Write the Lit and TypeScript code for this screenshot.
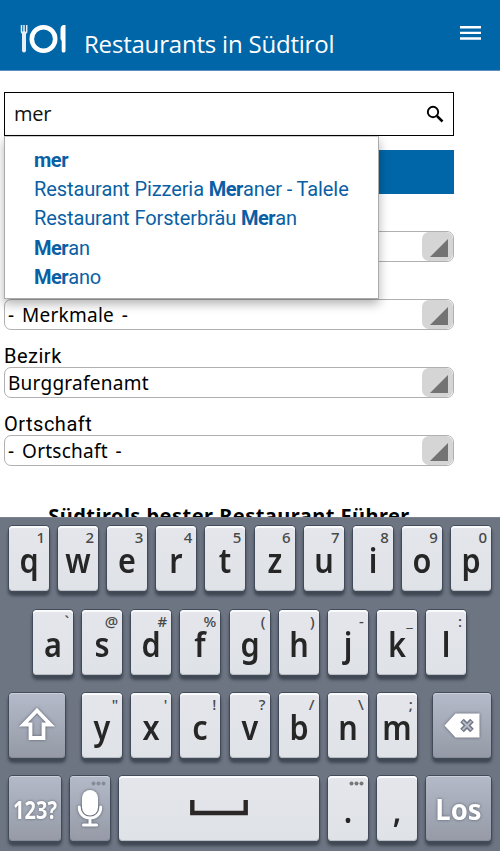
import { html, css, svg, LitElement } from 'lit';
import { customElement, property } from 'lit/decorators.js';

const icons: Record<string, any> = {
  shift: svg`<svg class="icon" width="36" height="36" viewBox="0 0 36 36">
    <path d="M18 3.500L31.500 17.500H24.500V31H11.500V17.500H4.500Z" fill="none" stroke="#fff" stroke-width="3.800"/>
  </svg>`,
  back: svg`<svg class="icon" width="36" height="25" viewBox="0 0 36 25">
    <path d="M.5 12.500L11.500 .5H35.500V24.500H11.500Z" fill="#fff"/>
    <path d="M18 7.500l10 10M28 7.500l-10 10" stroke="#6f7584" stroke-width="5"/>
    <path d="M18.700 8.200l8.600 8.600M27.300 8.200l-8.600 8.600" stroke="#b4b9c6" stroke-width="2"/>
  </svg>`,
  mic: svg`<svg class="icon" width="26" height="37" viewBox="0 0 26 37">
    <rect x="5" y="0" width="16" height="25.500" rx="8" fill="#fff"/>
    <path d="M2.300 17V18a10.700 10 0 0 0 21.400 0V17M13 28V34M6.500 35H19.500" fill="none" stroke="#fff" stroke-width="3" stroke-linecap="round"/>
  </svg>`,
  space: svg`<svg class="icon" width="58" height="16" viewBox="0 0 58 16">
    <path d="M2.300 0V13H55.700V0" fill="none" stroke="#2b2727" stroke-width="4.400"/>
  </svg>`,
};

@customElement('select-box')
export class SelectBox extends LitElement {
  static styles = css`
    :host {
      display: block;
      height: 68px;
      color: #000;
    }
    .label {
      box-sizing: border-box;
      height: 23px;
      padding-top: 1px;
      font: 20px/23px Roboto, sans-serif;
      letter-spacing: 0.5px;
    }
    .box {
      box-sizing: border-box;
      display: flex;
      justify-content: space-between;
      height: 31px;
      border: 1px solid #b0b0b0;
      border-radius: 7px;
      background: #fff;
      overflow: hidden;
    }
    .value {
      padding-left: 3px;
      font: 19px/31px "Noto Sans", sans-serif;
      letter-spacing: 0.25px;
      word-spacing: 2.500px;
    }
    .arrow {
      box-sizing: border-box;
      width: 31px;
      height: 29px;
      padding: 7px 0 0 8px;
      border-radius: 7px;
      background: #d5d5d5;
    }
    .arrow svg {
      display: block;
    }
  `;

  @property() label = '';
  @property() value = '';

  render() {
    return html`
      <div class="label">${this.label}</div>
      <div class="box">
        <span class="value">${this.value}</span>
        <span class="arrow">
          <svg width="18" height="18" viewBox="0 0 18 18"><path d="M18 0V18H0Z" fill="#737373"/></svg>
        </span>
      </div>
    `;
  }
}

@customElement('soft-key')
export class SoftKey extends LitElement {
  static styles = css`
    :host {
      display: block;
      flex: none;
    }
    .key {
      box-sizing: border-box;
      position: relative;
      height: 65px;
      border-radius: 4px;
      background: linear-gradient(#e4e6ec, #dfe2e6);
      box-shadow: inset 0 2px 0 #fafbfc, inset 0 -1px 0 #b9bcc0, 0 0 0 1px #414b59, 0 4px 3px 1px #3f4853;
      color: #262626;
      text-align: center;
    }
    .dark {
      background: linear-gradient(#b4bac9, #959aa6);
      box-shadow: inset 0 1px 0 #ccd0da, inset 0 -1px 0 #858a95, 0 0 0 1px #414b59, 0 4px 3px 1px #3f4853;
      color: #fff;
      text-shadow: 0 0 3px #555b68;
    }
    .main {
      padding-top: 17px;
      font: 600 34px/34px "Noto Sans", sans-serif;
      transform: scaleX(0.9);
    }
    .num {
      font: bold 25px/66px "Noto Sans", sans-serif;
      transform: scaleX(0.8);
      margin: 0 -10px;
    }
    .go {
      font: bold 28px/66px "Noto Sans", sans-serif;
      transform: scaleX(0.98);
    }
    .hint {
      position: absolute;
      top: 4px;
      right: 4px;
      font: 500 15px/14px "Noto Sans", sans-serif;
      color: #484848;
    }
    .dots {
      position: absolute;
      top: 5px;
      right: 4px;
    }
    .holder {
      display: flex;
      justify-content: center;
      align-items: center;
      height: 65px;
    }
    .icon {
      display: block;
    }
    .dark .icon {
      filter: drop-shadow(0 0 1.500px #555b68);
    }
  `;

  @property() main = '';
  @property() hint = '';
  @property() icon = '';
  @property() kind = 'main';

  render() {
    const dark = this.kind != 'main';
    const hint = this.hint == 'dots'
      ? html`<svg class="dots" width="15" height="5" viewBox="0 0 15 5">
          <g fill=${dark ? '#858b98' : '#777'}><circle cx="2.500" cy="2.500" r="2"/><circle cx="7.500" cy="2.500" r="2"/><circle cx="12.500" cy="2.500" r="2"/></g>
        </svg>`
      : html`<span class="hint">${this.hint}</span>`;

    return html`
      <div class="key ${dark || this.icon == 'mic' ? 'dark' : ''}">
        ${this.icon
          ? html`<div class="holder">${icons[this.icon]}</div>`
          : html`<div class=${this.kind}>${this.main}</div>`}
        ${this.hint ? hint : ''}
      </div>
    `;
  }
}

@customElement('app-root')
export class AppRoot extends LitElement {
  static styles = css`
    :host {
      display: flex;
      flex-direction: column;
      width: 500px;
      height: 851px;
      overflow: hidden;
      background: #fff;
    }
    .header {
      box-sizing: border-box;
      flex: none;
      display: flex;
      align-items: flex-start;
      height: 71px;
      padding: 24px 19px 0 20px;
      background: #0066a8;
      border-bottom: 1px solid #5f8fc0;
    }
    .title {
      flex: 1;
      margin: 3px 0 0 18px;
      font: 24px/34px "Open Sans", sans-serif;
      letter-spacing: -0.2px;
      color: #fff;
      white-space: nowrap;
    }
    .menu {
      margin-top: 2px;
    }
    .page {
      flex: 1;
      min-height: 0;
      overflow: hidden;
      width: 450px;
      padding: 21px 0 0 4px;
    }
    .search {
      box-sizing: border-box;
      position: relative;
      display: flex;
      justify-content: space-between;
      height: 44px;
      border: 1px solid #000;
      padding: 0 9px 0 9px;
    }
    .query {
      font: 20px/42px "Open Sans", sans-serif;
      letter-spacing: -0.3px;
      color: #111;
    }
    .search svg {
      margin-top: 12px;
    }
    .popup {
      box-sizing: border-box;
      position: absolute;
      z-index: 1;
      left: -1px;
      top: 43px;
      width: 375px;
      height: 163px;
      margin: 0;
      padding: 9px 0 0 29px;
      list-style: none;
      background: #fff;
      border: 1px solid #aaa;
      border-top-color: #ccc;
      box-shadow: 0 5px 10px rgba(0, 0, 0, 0.3);
    }
    .popup li {
      font: 20px/29.200px Roboto, sans-serif;
      letter-spacing: -0.1px;
      color: #0a5fa5;
      white-space: nowrap;
    }
    .popup b {
      letter-spacing: -0.5px;
    }
    .submit {
      height: 44px;
      margin: 14px 0 14px;
      background: #0066a8;
    }
    .heading {
      margin: 22px 0 0;
      font: bold 20px/28px "Noto Sans", sans-serif;
      letter-spacing: 0.47px;
      text-align: center;
      white-space: nowrap;
      color: #000;
    }
    .keyboard {
      box-sizing: border-box;
      flex: none;
      display: flex;
      flex-direction: column;
      gap: 18.200px;
      height: 334px;
      padding-top: 8.400px;
      background: #6d7482;
      border-top: 1px solid #7c8492;
    }
    .row {
      display: flex;
      justify-content: space-between;
      padding: 0 9px;
    }
    .row.second {
      padding: 0 34px 0 33px;
    }
    .row.third soft-key:first-child {
      margin-right: 8px;
    }
    .row.third soft-key:last-child {
      margin-left: 7px;
    }
    .w40 {
      width: 40px;
    }
    .w52 {
      width: 52px;
    }
    .w56 {
      width: 56px;
    }
    .w58 {
      width: 58px;
    }
    .w65 {
      width: 65px;
    }
    .w200 {
      width: 200px;
    }
  `;

  __letters(letters: string, hints: string) {
    return [...letters].map(
      (l, i) => html`<soft-key class="w40" main=${l} hint=${hints[i]}></soft-key>`
    );
  }

  render() {
    return html`
      <div class="header">
        <svg width="46" height="30" viewBox="0 0 46 30">
          <path d="M1.500 1V7.500Q1.500 9.500 4 9.500Q6.700 9.500 6.700 7.500V1M4 1V9" fill="none" stroke="#e6eff6" stroke-width="1.500"/>
          <path d="M4 9V26.500" stroke="#e6eff6" stroke-width="4" stroke-linecap="round"/>
          <circle cx="23.500" cy="15" r="11.700" fill="none" stroke="#fff" stroke-width="4.600"/>
          <path d="M45.500 1V27Q45.500 28.500 43.500 28.500Q41.700 28.500 41.700 27V17L40.500 15V6Q40.500 1 44 1Z" fill="#fff"/>
        </svg>
        <div class="title">Restaurants in Südtirol</div>
        <svg class="menu" width="21" height="14" viewBox="0 0 21 14">
          <path d="M0 1.300H21M0 6.900H21M0 12.500H21" stroke="#fff" stroke-width="2.400"/>
        </svg>
      </div>
      <div class="page">
        <div class="search">
          <span class="query">mer</span>
          <svg width="18" height="18" viewBox="0 0 18 18">
            <circle cx="7" cy="7" r="5.200" fill="none" stroke="#000" stroke-width="1.900"/>
            <path d="M11 11L16.500 16.500" stroke="#000" stroke-width="2.500"/>
          </svg>
          <ul class="popup">
            <li><b>mer</b></li>
            <li>Restaurant Pizzeria <b>Mer</b>aner - Talele</li>
            <li>Restaurant Forsterbräu <b>Mer</b>an</li>
            <li><b>Mer</b>an</li>
            <li><b>Mer</b>ano</li>
          </ul>
        </div>
        <div class="submit"></div>
        <select-box></select-box>
        <select-box value="- Merkmale -"></select-box>
        <select-box label="Bezirk" value="Burggrafenamt"></select-box>
        <select-box label="Ortschaft" value="- Ortschaft -"></select-box>
        <h2 class="heading">Südtirols bester Restaurant Führer</h2>
      </div>
      <div class="keyboard">
        <div class="row">${this.__letters('qwertzuiop', '1234567890')}</div>
        <div class="row second">${this.__letters('asdfghjkl', '`@#%()-_:')}</div>
        <div class="row third">
          <soft-key class="w56" kind="fn" icon="shift"></soft-key>
          ${this.__letters('yxcvbnm', '"\'!?/\\;')}
          <soft-key class="w58" kind="fn" icon="back"></soft-key>
        </div>
        <div class="row">
          <soft-key class="w52" kind="num" main="123?"></soft-key>
          <soft-key class="w40" kind="fn" icon="mic" hint="dots"></soft-key>
          <soft-key class="w200" icon="space"></soft-key>
          <soft-key class="w40" main="." hint="dots"></soft-key>
          <soft-key class="w40" main=","></soft-key>
          <soft-key class="w65" kind="go" main="Los"></soft-key>
        </div>
      </div>
    `;
  }
}
